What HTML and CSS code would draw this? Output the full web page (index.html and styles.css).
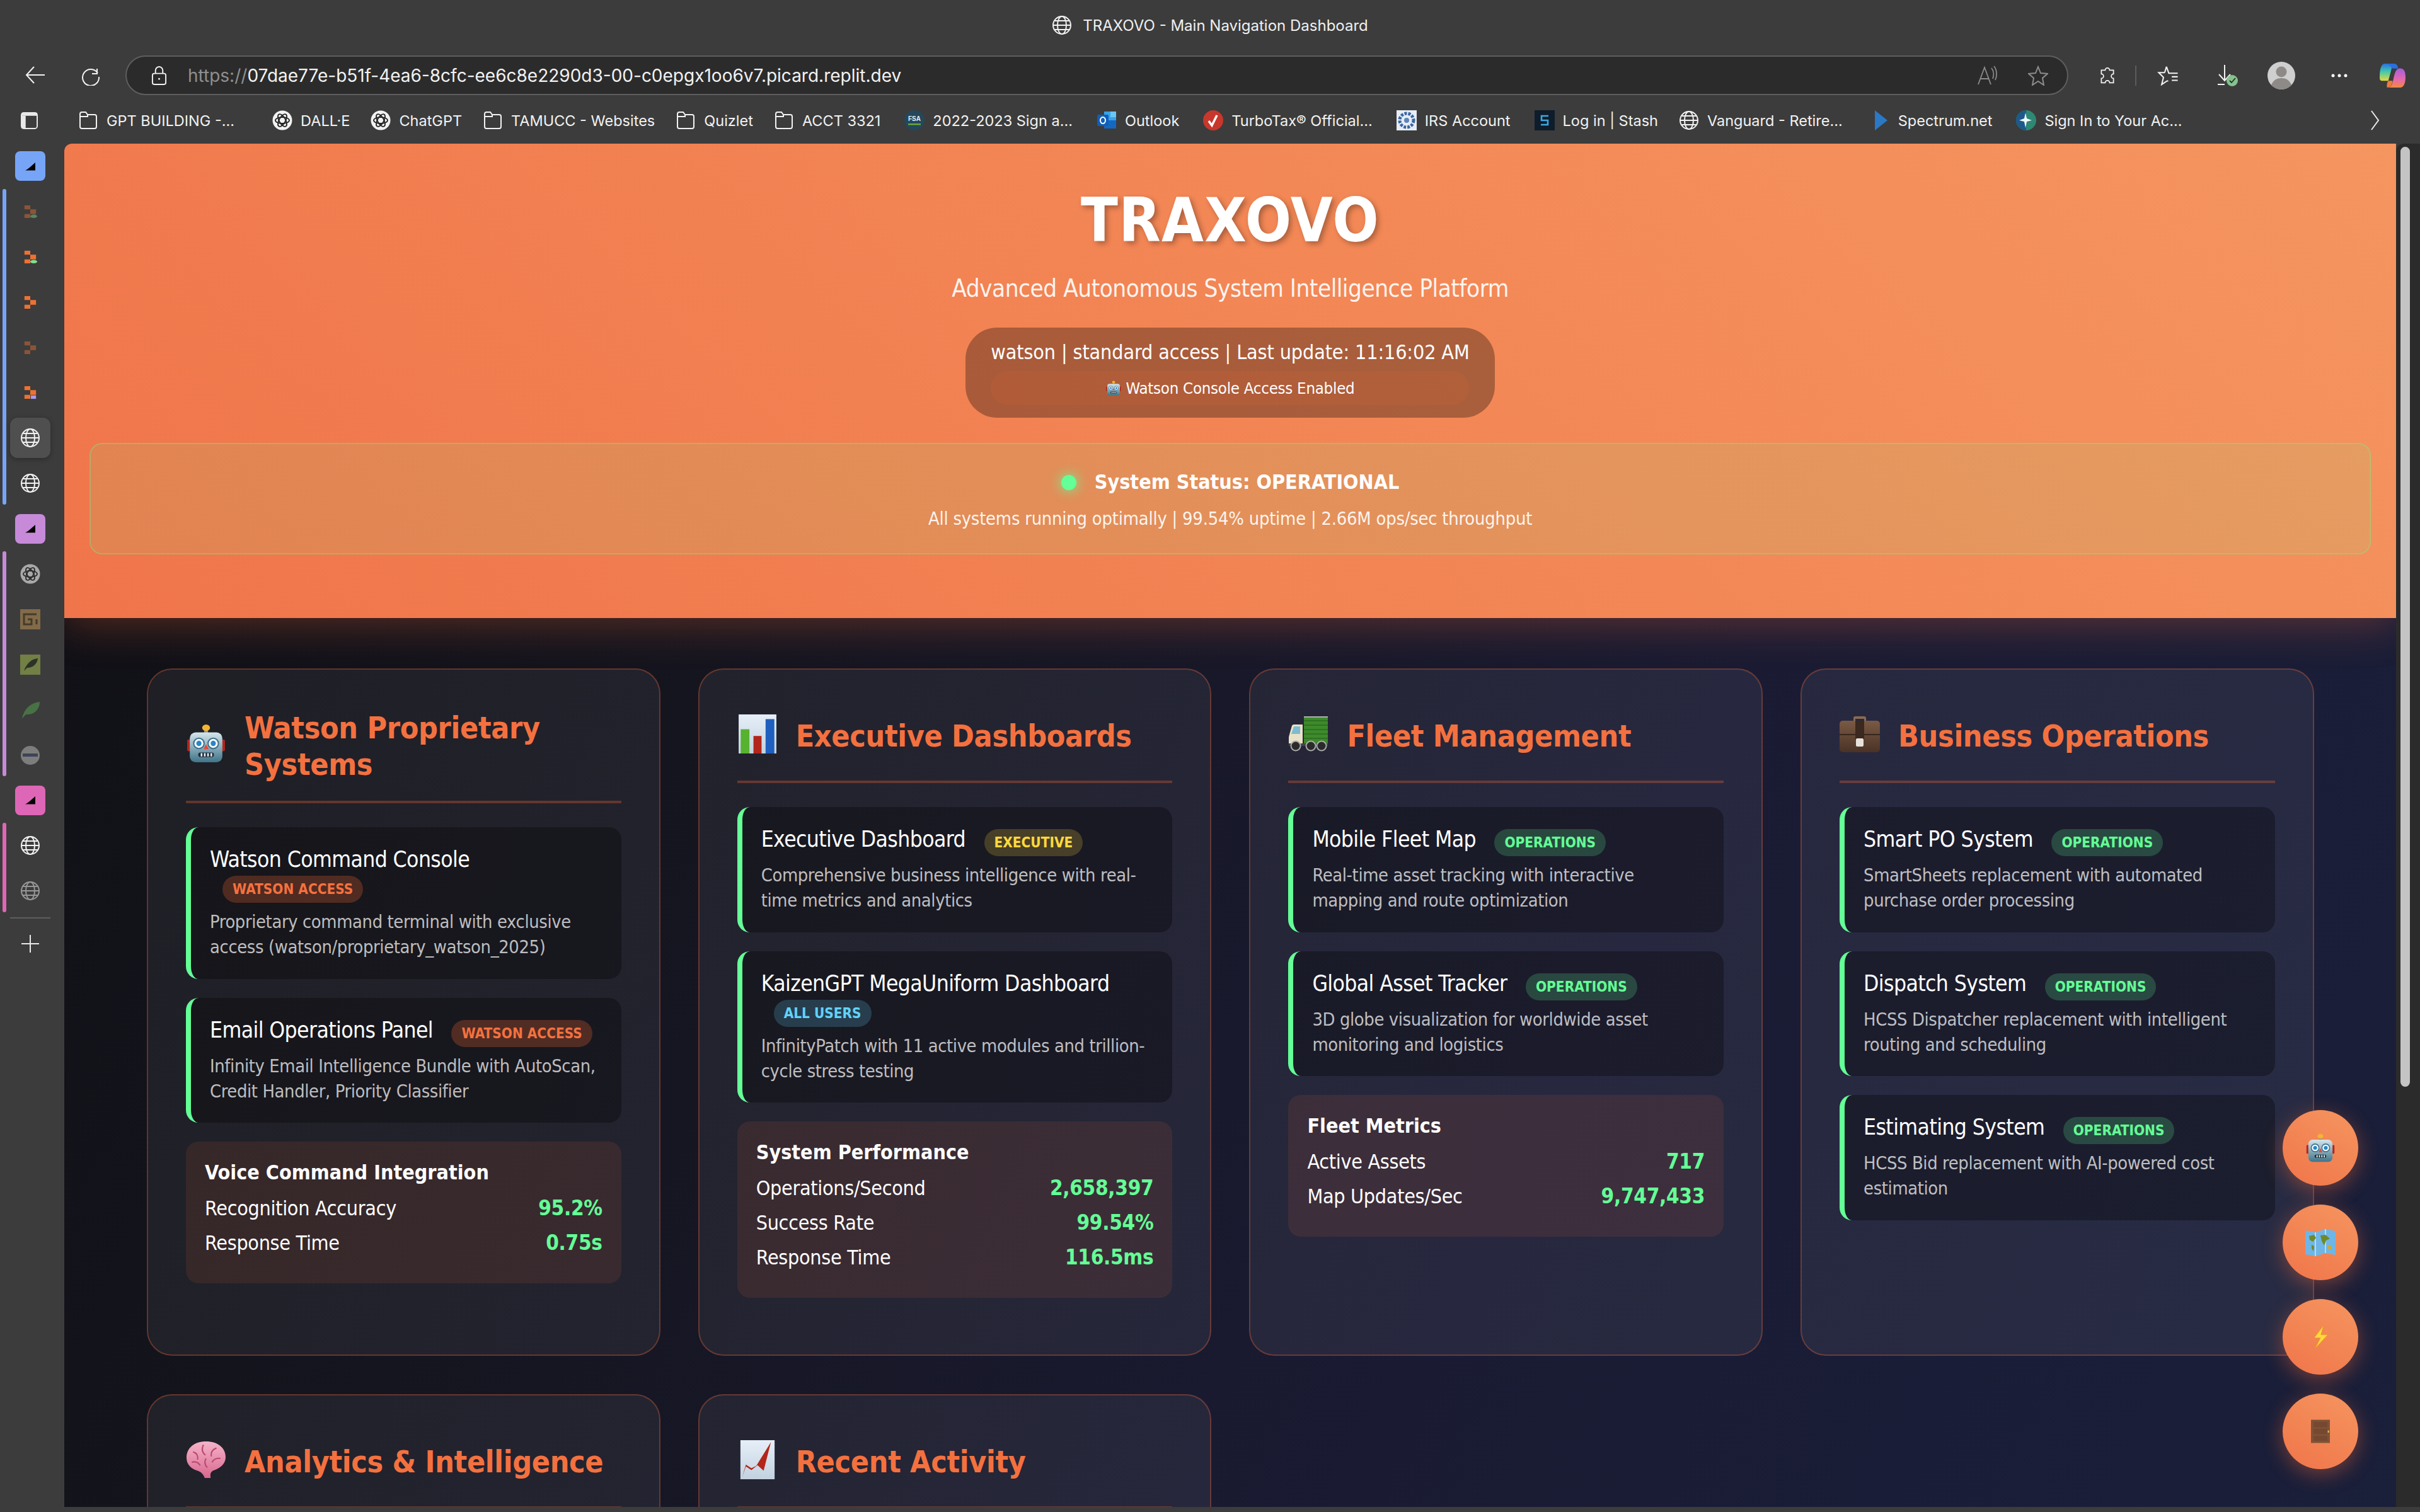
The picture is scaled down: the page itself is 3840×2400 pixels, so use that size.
FILE: index.html
```html
<!DOCTYPE html>
<html lang="en">
<head>
    <meta charset="UTF-8">
    <title>TRAXOVO - Main Navigation Dashboard</title>
    <link rel="stylesheet" href="styles.css">
</head>
<body>
    <!-- shared icons -->
    <svg class="defs" aria-hidden="true">
        <defs>
            <linearGradient id="robotFace" x1="0" y1="0" x2="0" y2="1"><stop offset="0" stop-color="#d5e6ec"/><stop offset="1" stop-color="#3f7488"/></linearGradient>
            <linearGradient id="paper" x1="0" y1="0" x2="0" y2="1"><stop offset="0" stop-color="#e6eff8"/><stop offset="1" stop-color="#c3d2e0"/></linearGradient>
            <linearGradient id="leather" x1="0" y1="0" x2="0" y2="1"><stop offset="0" stop-color="#7a5a44"/><stop offset="1" stop-color="#4a3226"/></linearGradient>
            <linearGradient id="brainPink" x1="0" y1="0" x2="0" y2="1"><stop offset="0" stop-color="#f5b3c8"/><stop offset="1" stop-color="#d9688f"/></linearGradient>
            <linearGradient id="copA" x1="0" y1="0" x2="0" y2="1"><stop offset="0" stop-color="#2a6fe0"/><stop offset=".45" stop-color="#3fc7b0"/><stop offset="1" stop-color="#e9d93c"/></linearGradient>
            <linearGradient id="copB" x1="0" y1="0" x2="0" y2="1"><stop offset="0" stop-color="#a45ee0"/><stop offset=".6" stop-color="#e86aa8"/><stop offset="1" stop-color="#f08a3c"/></linearGradient>

            <symbol id="globe" viewBox="0 0 32 32">
                <g fill="none" stroke="currentColor" stroke-width="2">
                    <circle cx="16" cy="16" r="14"/><ellipse cx="16" cy="16" rx="7" ry="14"/>
                    <path d="M2 16h28M4.500 9h23M4.500 23h23"/>
                </g>
            </symbol>
            <symbol id="folder" viewBox="0 0 32 32">
                <path d="M3 6a3 3 0 0 1 3-3h6l3 4h11a3 3 0 0 1 3 3v16a3 3 0 0 1-3 3H6a3 3 0 0 1-3-3zM3 10h12V7" fill="none" stroke="currentColor" stroke-width="2"/>
            </symbol>
            <symbol id="knot" viewBox="0 0 32 32">
                <circle cx="16" cy="16" r="15.500" fill="currentColor"/>
                <g fill="none" stroke="#222" stroke-width="1.800">
                    <ellipse cx="16" cy="16" rx="11" ry="5"/><ellipse cx="16" cy="16" rx="11" ry="5" transform="rotate(60 16 16)"/><ellipse cx="16" cy="16" rx="11" ry="5" transform="rotate(120 16 16)"/>
                </g>
            </symbol>
            <symbol id="wedge" viewBox="0 0 16 16"><path d="M0 14.500 C4 13 9 8 16 2v12.500z" fill="#000"/></symbol>
            <symbol id="replit" viewBox="0 0 24 24">
                <path d="M2 1h10v7H2zM2 16h10v7H2zM12 8h10v8H12z" fill="#ee7132"/>
            </symbol>

            <symbol id="robot" viewBox="0 0 60 60">
                <rect x="1" y="24" width="6" height="18" rx="2" fill="#b3261e"/><rect x="53" y="24" width="6" height="18" rx="2" fill="#b3261e"/>
                <rect x="27" y="6" width="6" height="10" fill="#8a8fa8"/><ellipse cx="30" cy="6" rx="6" ry="5" fill="#f2b632"/>
                <rect x="5" y="13" width="50" height="46" rx="9" fill="url(#robotFace)"/>
                <circle cx="19" cy="30" r="8" fill="#f4fbfd" stroke="#3f6f8f" stroke-width="2"/><circle cx="41" cy="30" r="8" fill="#f4fbfd" stroke="#3f6f8f" stroke-width="2"/>
                <circle cx="19" cy="30" r="4" fill="#2a86c9"/><circle cx="41" cy="30" r="4" fill="#2a86c9"/>
                <path d="M30 31l4 8h-8z" fill="#e2493c"/>
                <rect x="18" y="44" width="24" height="7" rx="3" fill="#1f2d3a"/><path d="M23 45v5M28 45v5M33 45v5M38 45v5" stroke="#e8eef2" stroke-width="2.500"/>
            </symbol>
            <symbol id="chart" viewBox="0 0 56 58">
                <rect width="56" height="58" fill="url(#paper)"/>
                <rect x="3" y="22" width="13" height="36" fill="#57b22f"/><rect x="22" y="32" width="12" height="26" fill="#b3261a"/><rect x="40" y="7" width="13" height="51" fill="#1f5fc0"/>
            </symbol>
            <symbol id="truck" viewBox="0 0 64 58">
                <rect x="25" y="1" width="38" height="43" fill="#3d8a2c"/><path d="M25 8h38M25 15h38M25 22h38M25 29h38M25 36h38" stroke="#2b6a1e" stroke-width="1.500"/><rect x="25" y="1" width="38" height="2" fill="#a9b3ad"/>
                <path d="M2 30 6 16q1-2 3-2h14v34H1V34z" fill="#e9e2c8"/><path d="M5 29l4-12h10v12z" fill="#7dbcd0"/>
                <rect x="1" y="44" width="62" height="4" fill="#444"/>
                <g fill="#2b2b2b" stroke="#aaa" stroke-width="2"><circle cx="12" cy="48" r="7.500"/><circle cx="36" cy="48" r="7.500"/><circle cx="53" cy="48" r="7.500"/></g>
            </symbol>
            <symbol id="briefcase" viewBox="0 0 64 60">
                <path d="M22 10V5q0-3 3-3h14q3 0 3 3v5h-3V6H25v4z" fill="#8a6a52"/>
                <rect y="9" width="64" height="50" rx="5" fill="url(#leather)"/><rect y="30" width="64" height="2" fill="#38251b"/>
                <rect x="25" y="9" width="14" height="30" fill="#3b281e"/><rect x="26" y="37" width="12" height="13" rx="2" fill="#e6e2dc"/>
            </symbol>
            <symbol id="brain" viewBox="0 0 60 60">
                <path d="M30 2C12 2 0 12 0 27c0 10 7 17 17 20 5 2 8 4 11 11h9c-1-7 0-10 6-12 11-4 17-11 17-20C60 12 48 2 30 2z" fill="url(#brainPink)"/>
                <path d="M10 18c6 2 8 6 7 12M26 7c-3 6-2 12 3 16M46 12c-6 2-9 6-8 13M52 28c-6-1-10 1-13 6M8 34c6-2 10 0 13 5M30 28c-3 5-2 10 2 14" fill="none" stroke="#b84a72" stroke-width="2"/>
            </symbol>
            <symbol id="trend" viewBox="0 0 56 64">
                <rect width="56" height="64" fill="url(#paper)"/>
                <path d="M3 60 9 40l9 6 8-4L50 3l-12 47-10-9-10 8-9-6z" fill="#b3261a"/>
            </symbol>
            <symbol id="worldmap" viewBox="0 0 48 44">
                <path d="M0 3l16 3 16-5 16 3v38l-16-3-16 5-16-3z" fill="#6fb6e6"/>
                <path d="M16 6v38M32 1v38" stroke="#cfe6f5" stroke-width="1.500"/>
                <path d="M6 12l8-2 3 5-5 6-5-3zM24 11l8-1 7 6-6 3-3 8-4-7zM10 26l4 2-1 8-3-4z" fill="#6f8a2a"/><path d="M36 27l6 1-1 5-6-1z" fill="#d1a92e"/>
            </symbol>
            <symbol id="bolt" viewBox="0 0 48 48">
                <path d="M30 2 12 26h12L14 46l24-26H25z" fill="#ffd93d" stroke="#e89a1c" stroke-width="1"/>
            </symbol>
            <symbol id="door" viewBox="0 0 44 54">
                <rect width="44" height="54" fill="#7f5238"/><rect x="6" y="5" width="32" height="12" fill="#744930"/><rect x="6" y="21" width="32" height="12" fill="#744930"/><rect x="6" y="38" width="32" height="11" fill="#744930"/><rect x="39" y="25" width="3" height="5" fill="#e6c24a"/>
            </symbol>
        </defs>
    </svg>

    <div class="titlebar">
        <svg class="ico-32"><use href="#globe"/></svg>
        <span>TRAXOVO - Main Navigation Dashboard</span>
    </div>

    <div class="toolbar">
        <svg class="nav-btn" viewBox="0 0 32 32"><path d="M31 15H3M14 2 2 15l12 13" fill="none" stroke="currentColor" stroke-width="2"/></svg>
        <svg class="nav-btn" viewBox="0 0 32 32"><path d="M26 5v8h-8M27 12A13 13 0 1 0 29 18" fill="none" stroke="currentColor" stroke-width="2"/></svg>
        <div class="address">
            <svg class="lock" viewBox="0 0 26 32"><path d="M7 13V8a6 6 0 0 1 12 0v5" fill="none" stroke="currentColor" stroke-width="2"/><rect x="2" y="13" width="22" height="18" rx="3" fill="none" stroke="currentColor" stroke-width="2"/><circle cx="13" cy="22" r="1.500" fill="currentColor"/></svg>
            <span class="url"><span class="url-dim">https://</span>07dae77e-b51f-4ea6-8cfc-ee6c8e2290d3-00-c0epgx1oo6v7.picard.replit.dev</span>
            <svg class="addr-ico" viewBox="0 0 32 32"><path d="M1 30 11 3l10 27M4 21h14M22 4c4 5 4 12 2 17M26 1c5 6 5 16 2 22" fill="none" stroke="#8c8c8c" stroke-width="1.800"/></svg>
            <svg class="addr-ico" viewBox="0 0 32 32"><path d="M16 2l4 10 11 1-8 7 2 11-9-6-9 6 2-11-8-7 11-1z" fill="none" stroke="#8c8c8c" stroke-width="2"/></svg>
        </div>
        <div class="actions">
            <svg class="act puzzle" viewBox="0 0 32 32"><path d="M12 6a4 4 0 1 1 8 0h7v7a4 4 0 1 0 0 8v8h-7a4 4 0 1 0-8 0H5v-8a4 4 0 1 0 0-8V6z" fill="none" stroke="currentColor" stroke-width="2"/></svg>
            <span class="divider"></span>
            <svg class="act fav" viewBox="0 0 36 34"><path d="M15 2l4 11h5M12 12H2l8 8-3 12 9-6h2M24 19h10M24 13h10M24 25h10M15 2l-3 10" fill="none" stroke="currentColor" stroke-width="2.200"/></svg>
            <svg class="act dl" viewBox="0 0 34 36"><path d="M12 1v24M3 16l9 10 9-10M1 32h11" fill="none" stroke="currentColor" stroke-width="2"/><circle cx="24" cy="26" r="9" fill="#86c28e"/><path d="M20 26l3 3 6-7" fill="none" stroke="#1f2f22" stroke-width="1.800"/></svg>
            <svg class="avatar" viewBox="0 0 44 44"><circle cx="22" cy="22" r="22" fill="#cfcfcf"/><circle cx="22" cy="16" r="8.500" fill="#8d8a87"/><path d="M6 37c3-8 9-11 16-11s13 3 16 11a22 22 0 0 1-32 0z" fill="#8d8a87"/></svg>
            <svg class="dots" viewBox="0 0 26 6"><circle cx="3" cy="3" r="2.500" fill="#fff"/><circle cx="13" cy="3" r="2.500" fill="#fff"/><circle cx="23" cy="3" r="2.500" fill="#fff"/></svg>
            <svg class="copilot" viewBox="0 0 44 42"><path d="M8 2c-5 2-7 10-7 22 0 4 1 6 4 6h10l7-26c-1-2-3-2-6-2z" fill="url(#copA)"/><path d="M14 2h10c4 0 6 2 7 8h-9z" fill="#2a6fe0"/><path d="M32 10c6-1 11 1 11 14 0 10-3 17-9 17H14c5 0 7-4 9-12 2-10 4-18 9-19z" fill="url(#copB)"/><path d="M15 30h7c-1 6-3 11-9 11-1-4 0-8 2-11z" fill="#ef7b3e"/></svg>
        </div>
    </div>

    <div class="bookmarks">
        <svg class="panel-toggle" viewBox="0 0 28 28"><rect x="1" y="1" width="26" height="26" rx="4" fill="none" stroke="#e9e9e9" stroke-width="2"/><rect x="1" y="1" width="26" height="5" fill="#e9e9e9"/><rect x="1" y="6" width="7" height="21" fill="#e9e9e9"/></svg>
        <a class="bm bm-cut"><svg class="ico-32"><use href="#folder"/></svg><span>GPT BUILDING -...</span></a>
        <a class="bm"><svg class="ico-32"><use href="#knot"/></svg><span>DALL·E</span></a>
        <a class="bm"><svg class="ico-32"><use href="#knot"/></svg><span>ChatGPT</span></a>
        <a class="bm"><svg class="ico-32"><use href="#folder"/></svg><span>TAMUCC - Websites</span></a>
        <a class="bm"><svg class="ico-32"><use href="#folder"/></svg><span>Quizlet</span></a>
        <a class="bm"><svg class="ico-32"><use href="#folder"/></svg><span>ACCT 3321</span></a>
        <a class="bm nudge"><svg class="ico-32" viewBox="0 0 32 32"><circle cx="16" cy="16" r="16" fill="#24475a"/><text x="16" y="17" font-size="10" font-family="Liberation Sans" font-weight="700" text-anchor="middle" fill="#e8eef0">FSA</text><rect x="6" y="21" width="20" height="2.500" fill="#6aa83a"/></svg><span>2022-2023 Sign a...</span></a>
        <a class="bm nudge"><svg class="ico-32" viewBox="0 0 32 32"><rect x="12" y="2" width="19" height="26" fill="#38a3e8"/><rect x="22" y="2" width="9" height="9" fill="#6cc6f2"/><path d="M12 16h19v13H12z" fill="#1468c0"/><rect x="1" y="7" width="18" height="18" rx="2" fill="#0f5fb8"/><ellipse cx="10" cy="16" rx="4" ry="5" fill="none" stroke="#fff" stroke-width="2"/></svg><span>Outlook</span></a>
        <a class="bm nudge"><svg class="ico-32" viewBox="0 0 32 32"><circle cx="16" cy="16" r="16" fill="#c8372c"/><path d="M9 17l5 7 8-16" fill="none" stroke="#fff" stroke-width="3.500"/></svg><span>TurboTax® Official...</span></a>
        <a class="bm nudge"><svg class="ico-32" viewBox="0 0 32 32"><rect width="32" height="32" fill="#e6edf5"/><circle cx="16" cy="16" r="11" fill="none" stroke="#3a66a0" stroke-width="5" stroke-dasharray="4 2"/><circle cx="16" cy="16" r="4" fill="#5b84b8"/></svg><span>IRS Account</span></a>
        <a class="bm nudge"><svg class="ico-32" viewBox="0 0 32 32"><rect width="32" height="32" fill="#0e1c2b"/><path d="M22 9H11v7h10v7H10" fill="none" stroke="#3fa9e0" stroke-width="2.600"/></svg><span>Log in | Stash</span></a>
        <a class="bm"><svg class="ico-32"><use href="#globe"/></svg><span>Vanguard - Retire...</span></a>
        <a class="bm bm-spectrum"><svg class="ico-spectrum" viewBox="0 0 24 32"><path d="M0 0l20 16L0 32z" fill="#2b78c4"/></svg><span>Spectrum.net</span></a>
        <a class="bm nudge"><svg class="ico-32" viewBox="0 0 32 32"><circle cx="16" cy="16" r="16" fill="#2e8873"/><path d="M0 16A16 16 0 0 1 16 0v32A16 16 0 0 1 0 16z" fill="#1d5a8a"/><path d="M15 4l2 9 8 3-8 2-2 10-2-10-8-2 8-3z" fill="#f2f8fb"/></svg><span>Sign In to Your Ac...</span></a>
        <svg class="bm-more" viewBox="0 0 14 32"><path d="M1 1l11 15L1 31" fill="none" stroke="#e9e9e9" stroke-width="2"/></svg>
    </div>

    <div class="workspace">
        <aside class="sidebar">
            <div class="tab"><span class="group-tab blue"><svg><use href="#wedge"/></svg></span></div>
            <div class="tab-group">
                <span class="group-line blue"></span>
                <div class="tab-list">
                    <div class="tab dim"><svg class="fav-icon" viewBox="0 0 24 24"><use href="#replit"/><ellipse cx="18" cy="20" rx="6" ry="3" fill="#7fe08f"/></svg></div>
                    <div class="tab"><svg class="fav-icon" viewBox="0 0 24 24"><use href="#replit"/><ellipse cx="18" cy="20" rx="6" ry="3" fill="#7fe08f"/></svg></div>
                    <div class="tab"><svg class="fav-icon" viewBox="0 0 24 24"><use href="#replit"/></svg></div>
                    <div class="tab dim"><svg class="fav-icon" viewBox="0 0 24 24"><use href="#replit"/></svg></div>
                    <div class="tab"><svg class="fav-icon" viewBox="0 0 24 24"><use href="#replit"/><rect x="13" y="17" width="9" height="6" fill="#a79af0"/></svg></div>
                    <div class="tab active"><svg class="ico-32"><use href="#globe"/></svg></div>
                    <div class="tab"><svg class="ico-32"><use href="#globe"/></svg></div>
                </div>
            </div>
            <div class="tab"><span class="group-tab purple"><svg><use href="#wedge"/></svg></span></div>
            <div class="tab-group">
                <span class="group-line purple"></span>
                <div class="tab-list">
                    <div class="tab knot-tab"><svg class="ico-32"><use href="#knot"/></svg></div>
                    <div class="tab dim"><svg class="ico-32" viewBox="0 0 32 32"><rect width="32" height="32" fill="#c89b55"/><path d="M26 8H6v16h12v-8h-6M26 16v8" fill="none" stroke="#4e3a1d" stroke-width="3"/></svg></div>
                    <div class="tab dim"><svg class="ico-32" viewBox="0 0 32 32"><rect width="32" height="32" fill="#a9c24f"/><path d="M6 26C10 14 18 7 28 6c-1 9-8 15-17 15z" fill="#1f2a15"/></svg></div>
                    <div class="tab dim"><svg class="ico-32" viewBox="0 0 32 32"><path d="M3 30C6 14 16 5 31 3c0 13-10 21-22 20z" fill="#55a84e"/></svg></div>
                    <div class="tab dim"><svg class="ico-32" viewBox="0 0 32 32"><ellipse cx="16" cy="16" rx="15" ry="15" fill="#bdbdbd"/><rect x="4" y="13" width="24" height="5" fill="#3d4f72"/></svg></div>
                </div>
            </div>
            <div class="tab"><span class="group-tab pink"><svg><use href="#wedge"/></svg></span></div>
            <div class="tab-group">
                <span class="group-line pink"></span>
                <div class="tab-list">
                    <div class="tab"><svg class="ico-32"><use href="#globe"/></svg></div>
                    <div class="tab dim"><svg class="ico-32"><use href="#globe"/></svg></div>
                </div>
            </div>
            <div class="side-sep"></div>
            <svg class="side-plus" viewBox="0 0 28 28"><path d="M14 0v28M0 14h28" stroke="#e9e9e9" stroke-width="2"/></svg>
        </aside>

        <div class="viewport">
            <div class="page">
                <header class="hero">
                    <h1>TRAXOVO</h1>
                    <p class="tagline">Advanced Autonomous System Intelligence Platform</p>
                    <div class="user-pill">
                        <div class="user-line">watson | standard access | Last update: 11:16:02 AM</div>
                        <div class="console-flag"><svg class="ico-flag"><use href="#robot"/></svg> Watson Console Access Enabled</div>
                    </div>
                    <div class="status-box">
                        <div class="status-line"><span class="status-dot"></span><span>System Status: OPERATIONAL</span></div>
                        <div class="status-sub">All systems running optimally | 99.54% uptime | 2.66M ops/sec throughput</div>
                    </div>
                </header>

                <main class="grid">
                    <section class="card">
                        <h2 class="card-head"><svg class="emoji robot-emoji"><use href="#robot"/></svg><span>Watson Proprietary Systems</span></h2>
                        <div class="item">
                            <h3>Watson Command Console <span class="badge watson">WATSON ACCESS</span></h3>
                            <p>Proprietary command terminal with exclusive access (watson/proprietary_watson_2025)</p>
                        </div>
                        <div class="item">
                            <h3>Email Operations Panel <span class="badge watson">WATSON ACCESS</span></h3>
                            <p>Infinity Email Intelligence Bundle with AutoScan, Credit Handler, Priority Classifier</p>
                        </div>
                        <div class="metrics">
                            <h4>Voice Command Integration</h4>
                            <div class="metric"><span>Recognition Accuracy</span><b>95.2%</b></div>
                            <div class="metric"><span>Response Time</span><b>0.75s</b></div>
                        </div>
                    </section>

                    <section class="card">
                        <h2 class="card-head"><svg class="emoji"><use href="#chart"/></svg><span>Executive Dashboards</span></h2>
                        <div class="item">
                            <h3>Executive Dashboard <span class="badge exec">EXECUTIVE</span></h3>
                            <p>Comprehensive business intelligence with real-time metrics and analytics</p>
                        </div>
                        <div class="item">
                            <h3>KaizenGPT MegaUniform Dashboard <span class="badge users">ALL USERS</span></h3>
                            <p>InfinityPatch with 11 active modules and trillion-cycle stress testing</p>
                        </div>
                        <div class="metrics">
                            <h4>System Performance</h4>
                            <div class="metric"><span>Operations/Second</span><b>2,658,397</b></div>
                            <div class="metric"><span>Success Rate</span><b>99.54%</b></div>
                            <div class="metric"><span>Response Time</span><b>116.5ms</b></div>
                        </div>
                    </section>

                    <section class="card">
                        <h2 class="card-head"><svg class="emoji"><use href="#truck"/></svg><span>Fleet Management</span></h2>
                        <div class="item">
                            <h3>Mobile Fleet Map <span class="badge ops">OPERATIONS</span></h3>
                            <p>Real-time asset tracking with interactive mapping and route optimization</p>
                        </div>
                        <div class="item">
                            <h3>Global Asset Tracker <span class="badge ops">OPERATIONS</span></h3>
                            <p>3D globe visualization for worldwide asset monitoring and logistics</p>
                        </div>
                        <div class="metrics">
                            <h4>Fleet Metrics</h4>
                            <div class="metric"><span>Active Assets</span><b>717</b></div>
                            <div class="metric"><span>Map Updates/Sec</span><b>9,747,433</b></div>
                        </div>
                    </section>

                    <section class="card">
                        <h2 class="card-head"><svg class="emoji"><use href="#briefcase"/></svg><span>Business Operations</span></h2>
                        <div class="item">
                            <h3>Smart PO System <span class="badge ops">OPERATIONS</span></h3>
                            <p>SmartSheets replacement with automated purchase order processing</p>
                        </div>
                        <div class="item">
                            <h3>Dispatch System <span class="badge ops">OPERATIONS</span></h3>
                            <p>HCSS Dispatcher replacement with intelligent routing and scheduling</p>
                        </div>
                        <div class="item">
                            <h3>Estimating System <span class="badge ops">OPERATIONS</span></h3>
                            <p>HCSS Bid replacement with AI-powered cost estimation</p>
                        </div>
                    </section>

                    <section class="card">
                        <h2 class="card-head"><svg class="emoji"><use href="#brain"/></svg><span>Analytics &amp; Intelligence</span></h2>
                    </section>

                    <section class="card">
                        <h2 class="card-head"><svg class="emoji"><use href="#trend"/></svg><span>Recent Activity</span></h2>
                    </section>
                </main>
            </div>

            <div class="fabs">
                <button class="fab"><svg class="fab-robot"><use href="#robot"/></svg></button>
                <button class="fab"><svg class="fab-map"><use href="#worldmap"/></svg></button>
                <button class="fab"><svg class="fab-bolt"><use href="#bolt"/></svg></button>
                <button class="fab"><svg class="fab-door"><use href="#door"/></svg></button>
            </div>
        </div>

        <div class="scrollbar"><span class="thumb"></span></div>
    </div>
</body>
</html>
```

FILE: styles.css
```css
* {
    margin: 0;
    padding: 0;
    box-sizing: border-box;
}
html, body {
    width: 3840px;
    height: 2400px;
    overflow: hidden;
}
body {
    background: #3c3c3c;
    color: #fff;
    font-family: Inter, "Liberation Sans", sans-serif;
    display: flex;
    flex-direction: column;
    padding-bottom: 8px;
}
.defs {
    position: absolute;
    width: 0;
    height: 0;
}
svg {
    display: block;
    flex: none;
    color: #f2f2f2;
}
.ico-32 {
    width: 32px;
    height: 32px;
}

/* browser chrome */
.titlebar {
    height: 80px;
    display: flex;
    align-items: center;
    justify-content: center;
    gap: 17px;
    font-size: 24px;
    color: #efefef;
}
.toolbar {
    height: 80px;
    display: flex;
    align-items: flex-start;
    padding-top: 8px;
    padding-left: 40px;
}
.nav-btn {
    width: 32px;
    height: 32px;
    margin: 16px 56px 0 0;
}
.address {
    width: 3083px;
    height: 63px;
    margin-left: -17px;
    background: #2b2b2b;
    border: 2px solid #5e5e5e;
    border-radius: 32px;
    display: flex;
    align-items: center;
    padding: 0 30px 0 39px;
}
.lock {
    width: 25px;
    height: 31px;
    margin-right: 33px;
}
.url {
    flex: 1;
    font-size: 28px;
    color: #f2f2f2;
}
.url-dim {
    color: #8f8f8f;
}
.addr-ico {
    width: 32px;
    height: 32px;
    margin-left: 48px;
}
.actions {
    display: flex;
    align-items: center;
    height: 63px;
    margin-left: 48px;
}
.puzzle {
    width: 28px;
    height: 34px;
}
.divider {
    width: 2px;
    height: 32px;
    background: #5c5c5c;
    margin: 0 33px 0 30px;
}
.fav {
    width: 35px;
    height: 32px;
}
.dl {
    width: 34px;
    height: 38px;
    margin: 0 46px 0 60px;
}
.avatar {
    width: 44px;
    height: 44px;
}
.dots {
    width: 26px;
    height: 6px;
    margin: 0 50px 0 57px;
}
.copilot {
    width: 43px;
    height: 41px;
}

.bookmarks {
    height: 68px;
    display: flex;
    align-items: center;
    gap: 33px;
    padding: 0 0 6px 33px;
    font-size: 23.500px;
    color: #f2f2f2;
}
.panel-toggle {
    width: 27px;
    height: 27px;
    margin-right: 31px;
}
.bm {
    display: flex;
    align-items: center;
    gap: 13px;
}
.bm-cut {
    margin-right: 27px;
}
.nudge {
    margin-left: 5px;
}
.bm-spectrum {
    margin-left: 18px;
}
.ico-spectrum {
    width: 24px;
    height: 32px;
}
.bm-more {
    width: 14px;
    height: 32px;
    margin-left: auto;
    margin-right: 64px;
}

/* side tabs */
.workspace {
    flex: 1;
    min-height: 0;
    display: flex;
}
.sidebar {
    width: 102px;
    flex: none;
    display: flex;
    flex-direction: column;
}
.tab {
    height: 71.900px;
    width: 64px;
    margin-left: 16px;
    display: flex;
    align-items: center;
    justify-content: center;
    border-radius: 12px;
}
.tab.active {
    background: #4f4f4f;
    box-shadow: 0 2px 8px rgba(0, 0, 0, 0.3);
    height: 64px;
    margin-top: 4px;
    margin-bottom: 3.900px;
}
.tab.dim svg {
    opacity: 0.5;
}
.knot-tab {
    opacity: 0.6;
}
.tab.dim .fav-icon {
    opacity: 0.45;
}
.fav-icon {
    width: 22px;
    height: 22px;
}
.group-tab {
    width: 48px;
    height: 47px;
    border-radius: 8px;
    display: flex;
    align-items: center;
    justify-content: center;
}
.group-tab svg {
    width: 16px;
    height: 16px;
}
.blue { background: #76a5f8; }
.purple { background: #c68ad8; }
.pink { background: #de66b6; }
.tab-group {
    display: flex;
}
.group-line {
    width: 6px;
    margin: 0 0 2px 4px;
    border-radius: 3px;
}
.tab-list {
    display: flex;
    flex-direction: column;
}
.tab-list .tab {
    margin-left: 6px;
}
.side-sep {
    height: 2px;
    width: 64px;
    margin: 6px 0 0 16px;
    background: #5e5e5e;
}
.side-plus {
    width: 28px;
    height: 28px;
    margin: 26px 0 0 34px;
}

/* the page itself */
.viewport {
    flex: 1;
    min-width: 0;
    position: relative;
}
.page {
    height: 100%;
    overflow: hidden;
    border-top-left-radius: 12px;
    background: linear-gradient(115deg, #0f0f14 0%, #15151f 30%, #1a1b33 65%, #1a1f3a 100%);
    font-family: "DejaVu Sans Condensed", "DejaVu Sans", sans-serif;
    font-stretch: condensed;
}
.hero {
    height: 753px;
    padding: 64px 40px 0;
    text-align: center;
    background: linear-gradient(45deg, #f0754a 0%, #f5955f 100%);
    box-shadow: 0 8px 64px rgba(255, 107, 53, 0.3);
    position: relative;
}
.hero h1 {
    font-size: 96px;
    font-weight: 700;
    line-height: 116px;
    letter-spacing: 1.300px;
    text-shadow: 4px 4px 8px rgba(0, 0, 0, 0.3);
    margin-bottom: 27px;
}
.tagline {
    font-size: 38.400px;
    line-height: 46px;
    letter-spacing: -0.500px;
    color: rgba(255, 255, 255, 0.92);
    margin-bottom: 39px;
}
.user-pill {
    display: inline-block;
    padding: 20px 40px;
    border-radius: 50px;
    background: rgba(0, 0, 0, 0.3);
}
.user-line {
    font-size: 32px;
    line-height: 39px;
    letter-spacing: -0.120px;
    margin-bottom: 10px;
}
.console-flag {
    font-size: 25.600px;
    line-height: 54px;
    letter-spacing: -0.250px;
    border-radius: 30px;
    background: rgba(255, 107, 53, 0.1);
    display: flex;
    justify-content: center;
    align-items: center;
    gap: 8px;
}
.ico-flag {
    width: 24px;
    height: 26px;
}
.status-box {
    margin-top: 40px;
    height: 177px;
    padding: 41px 0 0;
    border: 2px solid rgba(100, 255, 150, 0.3);
    border-radius: 20px;
    background: rgba(100, 255, 150, 0.1);
}
.status-line {
    display: flex;
    align-items: center;
    justify-content: center;
    gap: 29px;
    font-size: 32px;
    font-weight: 700;
    line-height: 39px;
    margin-bottom: 21px;
}
.status-dot {
    width: 24px;
    height: 24px;
    border-radius: 50%;
    background: #64ff96;
    box-shadow: 0 0 20px #64ff96;
}
.status-sub {
    font-size: 28.800px;
    line-height: 35px;
    letter-spacing: -0.200px;
    color: rgba(255, 255, 255, 0.92);
}

.grid {
    display: grid;
    grid-template-columns: repeat(4, 814.700px);
    column-gap: 60px;
    row-gap: 61px;
    padding: 80px 0 0 131px;
}
.card {
    min-height: 1090px;
    padding: 60px;
    border: 2px solid rgba(255, 107, 53, 0.3);
    border-radius: 40px;
    background: rgba(255, 255, 255, 0.06);
}
.card-head {
    display: flex;
    align-items: center;
    gap: 29px;
    min-height: 84px;
    padding-bottom: 32px;
    box-sizing: content-box;
    border-bottom: 4px solid rgba(255, 107, 53, 0.3);
    margin-bottom: 38px;
    font-size: 48px;
    line-height: 58px;
    font-weight: 700;
    letter-spacing: -0.350px;
    color: #f4713f;
}
.card-head span {
    margin: 3px 0 -3px;
}
.emoji {
    width: 64px;
    height: 62px;
}
.robot-emoji {
    margin-top: -2px;
}
.item {
    margin-bottom: 30px;
    padding: 30px;
    border-left: 8px solid #64ff96;
    border-radius: 20px;
    background: rgba(0, 0, 0, 0.3);
}
.item h3 {
    font-size: 35.200px;
    font-weight: 400;
    line-height: 42px;
    letter-spacing: -0.600px;
    margin-bottom: 10px;
}
.item p {
    font-size: 28.800px;
    line-height: 40.300px;
    letter-spacing: -0.370px;
    color: rgba(255, 255, 255, 0.72);
}
.badge {
    display: inline-block;
    margin-left: 20px;
    margin-top: 5px;
    padding: 0 16px;
    border-radius: 25px;
    font-size: 22.400px;
    font-weight: 700;
    line-height: 43px;
    letter-spacing: 0;
    vertical-align: top;
}
.watson { background: rgba(255, 107, 53, 0.25); color: #f4713f; }
.exec { background: rgba(255, 217, 61, 0.2); color: #ffd93d; }
.users { background: rgba(100, 210, 255, 0.2); color: #62d2fa; }
.ops { background: rgba(100, 255, 150, 0.2); color: #64ff96; }
.metrics {
    margin: 0 0 30px;
    padding: 30px 30px 37px;
    border-radius: 20px;
    background: rgba(255, 107, 53, 0.1);
}
.metrics h4 {
    font-size: 32px;
    font-weight: 700;
    line-height: 39px;
    margin-bottom: 9px;
}
.metric {
    height: 55px;
    display: flex;
    align-items: center;
    justify-content: space-between;
    font-size: 32px;
    letter-spacing: -0.300px;
}
.metric b {
    color: #64ff96;
    font-size: 33px;
}

/* floating buttons */
.fabs {
    position: absolute;
    right: 60px;
    bottom: 60px;
    display: flex;
    flex-direction: column;
    gap: 30px;
}
.fab {
    width: 120px;
    height: 120px;
    border: none;
    border-radius: 50%;
    background: linear-gradient(30deg, #f0754a, #f5955f);
    box-shadow: 0 8px 32px rgba(255, 107, 53, 0.4);
    display: flex;
    align-items: center;
    justify-content: center;
}
.fab-robot { width: 46px; height: 46px; }
.fab-map { width: 48px; height: 44px; }
.fab-bolt { width: 40px; height: 44px; }
.fab-door { width: 30px; height: 46px; }

.scrollbar {
    width: 38px;
    flex: none;
    background: #2b2b2b;
    border-top-left-radius: 12px;
    padding: 5px 0 0 7px;
}
.thumb {
    display: block;
    width: 15px;
    height: 1492px;
    border-radius: 8px;
    background: #c4c4c4;
}
```
